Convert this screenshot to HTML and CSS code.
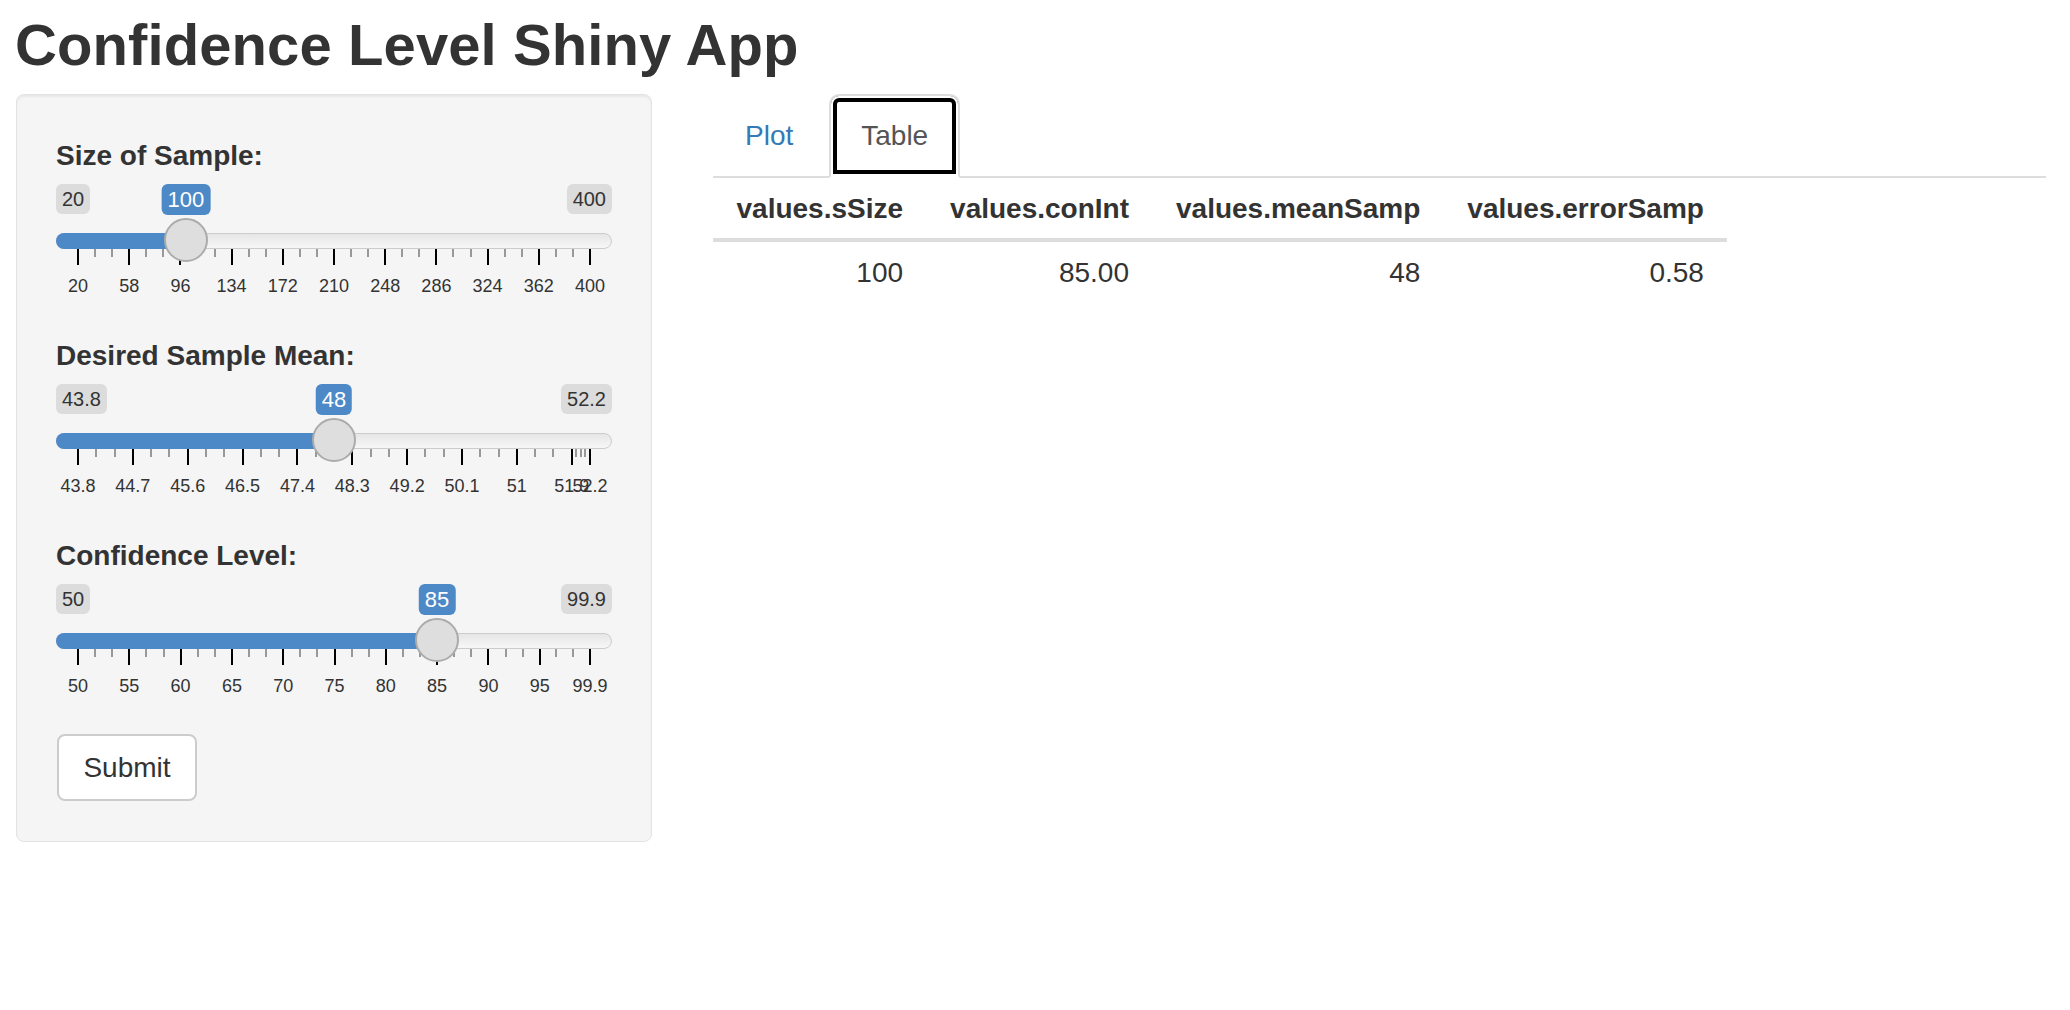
FILE: index.html
```html
<!DOCTYPE html>
<html>
<head>
<meta charset="utf-8">
<title>Confidence Level Shiny App</title>
<link rel="stylesheet" href="styles.css">
</head>
<body>
<div class="container">
  <h1 class="title">Confidence Level Shiny App</h1>
  <div class="row">
    <div class="well">
      <div class="form-group">
        <label class="control-label">Size of Sample:</label>
        <div class="irs" style="--v: 21.053">
          <span class="irs-line"></span>
          <span class="irs-bar"></span>
          <span class="irs-min">20</span>
          <span class="irs-max">400</span>
          <span class="irs-single">100</span>
          <div class="irs-grid">
            <span class="pol" style="--p:0"></span><span class="pol small" style="--p:3.333"></span><span class="pol small" style="--p:6.667"></span>
            <span class="pol" style="--p:10"></span><span class="pol small" style="--p:13.333"></span><span class="pol small" style="--p:16.667"></span>
            <span class="pol" style="--p:20"></span><span class="pol small" style="--p:23.333"></span><span class="pol small" style="--p:26.667"></span>
            <span class="pol" style="--p:30"></span><span class="pol small" style="--p:33.333"></span><span class="pol small" style="--p:36.667"></span>
            <span class="pol" style="--p:40"></span><span class="pol small" style="--p:43.333"></span><span class="pol small" style="--p:46.667"></span>
            <span class="pol" style="--p:50"></span><span class="pol small" style="--p:53.333"></span><span class="pol small" style="--p:56.667"></span>
            <span class="pol" style="--p:60"></span><span class="pol small" style="--p:63.333"></span><span class="pol small" style="--p:66.667"></span>
            <span class="pol" style="--p:70"></span><span class="pol small" style="--p:73.333"></span><span class="pol small" style="--p:76.667"></span>
            <span class="pol" style="--p:80"></span><span class="pol small" style="--p:83.333"></span><span class="pol small" style="--p:86.667"></span>
            <span class="pol" style="--p:90"></span><span class="pol small" style="--p:93.333"></span><span class="pol small" style="--p:96.667"></span>
            <span class="pol" style="--p:100"></span>
            <span class="txt" style="--p:0">20</span>
            <span class="txt" style="--p:10">58</span>
            <span class="txt" style="--p:20">96</span>
            <span class="txt" style="--p:30">134</span>
            <span class="txt" style="--p:40">172</span>
            <span class="txt" style="--p:50">210</span>
            <span class="txt" style="--p:60">248</span>
            <span class="txt" style="--p:70">286</span>
            <span class="txt" style="--p:80">324</span>
            <span class="txt" style="--p:90">362</span>
            <span class="txt" style="--p:100">400</span>
          </div>
          <span class="irs-handle"></span>
        </div>
      </div>

      <div class="form-group">
        <label class="control-label">Desired Sample Mean:</label>
        <div class="irs" style="--v: 50">
          <span class="irs-line"></span>
          <span class="irs-bar"></span>
          <span class="irs-min">43.8</span>
          <span class="irs-max">52.2</span>
          <span class="irs-single">48</span>
          <div class="irs-grid">
            <span class="pol" style="--p:0"></span><span class="pol small" style="--p:3.571"></span><span class="pol small" style="--p:7.143"></span>
            <span class="pol" style="--p:10.714"></span><span class="pol small" style="--p:14.286"></span><span class="pol small" style="--p:17.857"></span>
            <span class="pol" style="--p:21.429"></span><span class="pol small" style="--p:25"></span><span class="pol small" style="--p:28.571"></span>
            <span class="pol" style="--p:32.143"></span><span class="pol small" style="--p:35.714"></span><span class="pol small" style="--p:39.286"></span>
            <span class="pol" style="--p:42.857"></span><span class="pol small" style="--p:46.429"></span><span class="pol small" style="--p:50"></span>
            <span class="pol" style="--p:53.571"></span><span class="pol small" style="--p:57.143"></span><span class="pol small" style="--p:60.714"></span>
            <span class="pol" style="--p:64.286"></span><span class="pol small" style="--p:67.857"></span><span class="pol small" style="--p:71.429"></span>
            <span class="pol" style="--p:75"></span><span class="pol small" style="--p:78.571"></span><span class="pol small" style="--p:82.143"></span>
            <span class="pol" style="--p:85.714"></span><span class="pol small" style="--p:89.286"></span><span class="pol small" style="--p:92.857"></span>
            <span class="pol" style="--p:96.429"></span><span class="pol small" style="--p:97.32"></span><span class="pol small" style="--p:98.21"></span><span class="pol small" style="--p:99.11"></span>
            <span class="pol" style="--p:100"></span>
            <span class="txt" style="--p:0">43.8</span>
            <span class="txt" style="--p:10.714">44.7</span>
            <span class="txt" style="--p:21.429">45.6</span>
            <span class="txt" style="--p:32.143">46.5</span>
            <span class="txt" style="--p:42.857">47.4</span>
            <span class="txt" style="--p:53.571">48.3</span>
            <span class="txt" style="--p:64.286">49.2</span>
            <span class="txt" style="--p:75">50.1</span>
            <span class="txt" style="--p:85.714">51</span>
            <span class="txt" style="--p:96.429">51.9</span>
            <span class="txt" style="--p:100">52.2</span>
          </div>
          <span class="irs-handle"></span>
        </div>
      </div>

      <div class="form-group">
        <label class="control-label">Confidence Level:</label>
        <div class="irs" style="--v: 70.14">
          <span class="irs-line"></span>
          <span class="irs-bar"></span>
          <span class="irs-min">50</span>
          <span class="irs-max">99.9</span>
          <span class="irs-single">85</span>
          <div class="irs-grid">
            <span class="pol" style="--p:0"></span><span class="pol small" style="--p:3.34"></span><span class="pol small" style="--p:6.68"></span>
            <span class="pol" style="--p:10.02"></span><span class="pol small" style="--p:13.36"></span><span class="pol small" style="--p:16.7"></span>
            <span class="pol" style="--p:20.04"></span><span class="pol small" style="--p:23.38"></span><span class="pol small" style="--p:26.72"></span>
            <span class="pol" style="--p:30.06"></span><span class="pol small" style="--p:33.4"></span><span class="pol small" style="--p:36.74"></span>
            <span class="pol" style="--p:40.08"></span><span class="pol small" style="--p:43.42"></span><span class="pol small" style="--p:46.76"></span>
            <span class="pol" style="--p:50.1"></span><span class="pol small" style="--p:53.44"></span><span class="pol small" style="--p:56.78"></span>
            <span class="pol" style="--p:60.12"></span><span class="pol small" style="--p:63.46"></span><span class="pol small" style="--p:66.8"></span>
            <span class="pol" style="--p:70.14"></span><span class="pol small" style="--p:73.48"></span><span class="pol small" style="--p:76.82"></span>
            <span class="pol" style="--p:80.16"></span><span class="pol small" style="--p:83.5"></span><span class="pol small" style="--p:86.84"></span>
            <span class="pol" style="--p:90.18"></span><span class="pol small" style="--p:93.45"></span><span class="pol small" style="--p:96.73"></span>
            <span class="pol" style="--p:100"></span>
            <span class="txt" style="--p:0">50</span>
            <span class="txt" style="--p:10.02">55</span>
            <span class="txt" style="--p:20.04">60</span>
            <span class="txt" style="--p:30.06">65</span>
            <span class="txt" style="--p:40.08">70</span>
            <span class="txt" style="--p:50.1">75</span>
            <span class="txt" style="--p:60.12">80</span>
            <span class="txt" style="--p:70.14">85</span>
            <span class="txt" style="--p:80.16">90</span>
            <span class="txt" style="--p:90.18">95</span>
            <span class="txt" style="--p:100">99.9</span>
          </div>
          <span class="irs-handle"></span>
        </div>
      </div>

      <button class="btn" type="button">Submit</button>
    </div>

    <div class="main">
      <ul class="nav-tabs">
        <li><a class="tab">Plot</a></li>
        <li><a class="tab active">Table</a></li>
      </ul>
      <table class="shiny-table">
        <thead>
          <tr>
            <th>values.sSize</th>
            <th>values.conInt</th>
            <th>values.meanSamp</th>
            <th>values.errorSamp</th>
          </tr>
        </thead>
        <tbody>
          <tr>
            <td>100</td>
            <td>85.00</td>
            <td>48</td>
            <td>0.58</td>
          </tr>
        </tbody>
      </table>
    </div>
  </div>
</div>
</body>
</html>
```

FILE: styles.css
```css
* {
  box-sizing: border-box;
}

html, body {
  margin: 0;
  padding: 0;
  background: #fff;
}

body {
  font-family: "Liberation Sans", Arial, Helvetica, sans-serif;
  font-size: 28px;
  line-height: 40px;
  color: #333;
}

.container {
  padding: 0 24px 0 16px;
}

.title {
  margin: 0;
  padding-top: 11px;
  margin-bottom: 15px;
  margin-left: -1px;
  font-size: 58px;
  line-height: 68px;
  font-weight: 700;
  letter-spacing: 0.1px;
  color: #333;
}

.row {
  display: grid;
  grid-template-columns: 636px 1fr;
  column-gap: 61px;
  align-items: start;
}

/* sidebar well */
.well {
  display: flex;
  flex-direction: column;
  gap: 39px;
  padding: 41px 39px 40px;
  background: #f5f5f5;
  border: 1px solid #e3e3e3;
  border-radius: 8px;
  box-shadow: inset 0 2px 2px rgba(0, 0, 0, 0.05);
}

.form-group {
  display: flex;
  flex-direction: column;
  gap: 8px;
}

.control-label {
  font-weight: 700;
  line-height: 40px;
}

/* slider */
.irs {
  position: relative;
  height: 113px;
}

.irs-line {
  position: absolute;
  left: 0;
  right: 0;
  top: 49px;
  height: 16px;
  border: 1px solid #cccccc;
  border-radius: 16px;
  background: linear-gradient(to bottom, #dedede -50%, #ffffff 150%);
}

.irs-bar {
  position: absolute;
  left: 0;
  top: 49px;
  height: 16px;
  width: calc(22px + (100% - 44px) * var(--v) / 100);
  background: #4e89c7;
  border-radius: 16px 0 0 16px;
}

.irs-min,
.irs-max {
  position: absolute;
  top: 0;
  height: 30px;
  padding: 2px 6px;
  font-size: 20px;
  line-height: 26px;
  color: #333;
  background: rgba(0, 0, 0, 0.1);
  border-radius: 6px;
}

.irs-min {
  left: 0;
}

.irs-max {
  right: 0;
}

.irs-single {
  position: absolute;
  top: 0;
  height: 31px;
  left: calc(22px + (100% - 44px) * var(--v) / 100);
  transform: translateX(-50%);
  padding: 2px 6px;
  font-size: 22px;
  line-height: 27px;
  color: #fff;
  background: #4e89c7;
  border-radius: 6px;
}

.irs-handle {
  position: absolute;
  top: 34px;
  left: calc((100% - 44px) * var(--v) / 100);
  width: 44px;
  height: 44px;
  border-radius: 50%;
  background: #dedede;
  border: 2px solid #ababab;
}

.irs-grid {
  position: absolute;
  left: 22px;
  right: 22px;
  top: 65px;
  height: 48px;
}

.pol {
  position: absolute;
  top: 0;
  left: calc(var(--p) * 1%);
  width: 2px;
  margin-left: -1px;
  height: 16px;
  background: #000;
}

.pol.small {
  height: 8px;
  background: #999;
}

.txt {
  position: absolute;
  top: 26px;
  left: calc(var(--p) * 1%);
  transform: translateX(-50%);
  font-size: 18px;
  line-height: 22px;
  color: #333;
  white-space: nowrap;
}

/* button */
.btn {
  align-self: flex-start;
  margin-top: -2px;
  margin-left: 1px;
  width: 140px;
  height: 67px;
  padding: 0;
  font-family: inherit;
  font-size: 28px;
  line-height: 40px;
  color: #333;
  background: #fff;
  border: 2px solid #cccccc;
  border-radius: 8px;
}

/* main panel */
.main {
  min-width: 0;
}

.nav-tabs {
  display: flex;
  margin: 0;
  padding: 0;
  list-style: none;
  border-bottom: 2px solid #dddddd;
}

.nav-tabs li {
  margin-bottom: -2px;
  margin-right: 4px;
}

.tab {
  display: block;
  padding: 20px 30px;
  line-height: 40px;
  border: 2px solid transparent;
  border-radius: 8px 8px 0 0;
  color: #337ab7;
}

.tab.active {
  color: #555;
  background: #fff;
  border-color: #dddddd #dddddd transparent;
  box-shadow: inset 0 0 0 2px #fff, inset 0 0 0 6px #000;
  border-radius: 10px 10px 0 0;
}

.shiny-table {
  border-collapse: collapse;
  border-spacing: 0;
}

.shiny-table th,
.shiny-table td {
  padding: 11px 23.5px 9px;
  text-align: right;
  line-height: 40px;
}

.shiny-table th {
  font-weight: 700;
  border-bottom: 4px solid #dddddd;
}
```
